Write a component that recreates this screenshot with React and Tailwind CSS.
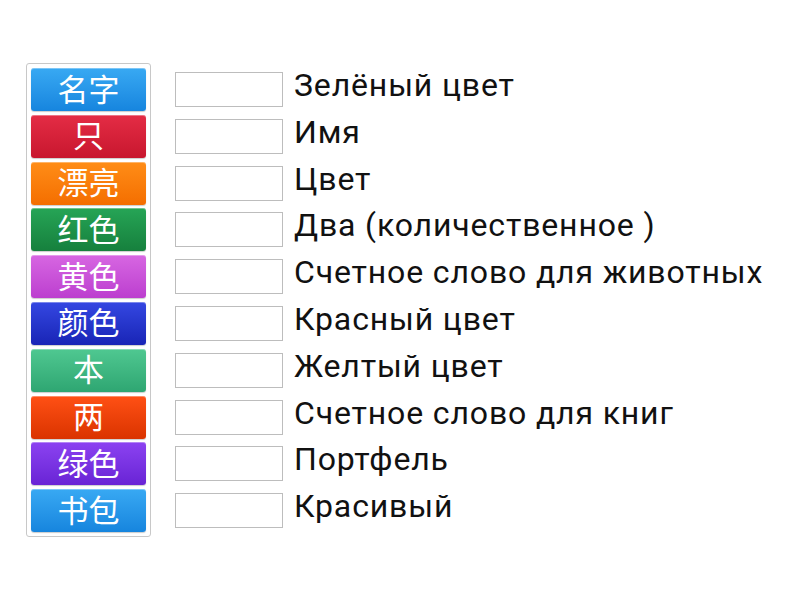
const tiles = [
  { zh: '名字', cls: 'bg-gradient-to-b from-[#38a9f3] to-[#1685de]' },
  { zh: '只', cls: 'bg-gradient-to-b from-[#e42c45] to-[#c8162e]' },
  { zh: '漂亮', cls: 'bg-gradient-to-b from-[#ff8d16] to-[#f46e00]' },
  { zh: '红色', cls: 'bg-gradient-to-b from-[#26a556] to-[#16803d]' },
  { zh: '黄色', cls: 'bg-gradient-to-b from-[#d766e2] to-[#bc3ecf]' },
  { zh: '颜色', cls: 'bg-gradient-to-b from-[#3547e2] to-[#1924b6]' },
  { zh: '本', cls: 'bg-gradient-to-b from-[#4fc891] to-[#2ea672]' },
  { zh: '两', cls: 'bg-gradient-to-b from-[#ff5014] to-[#da3300]' },
  { zh: '绿色', cls: 'bg-gradient-to-b from-[#8c42f1] to-[#6923d5]' },
  { zh: '书包', cls: 'bg-gradient-to-b from-[#38a9f3] to-[#1685de]' },
]

const answers = [
  'Зелёный цвет',
  'Имя',
  'Цвет',
  'Два (количественное )',
  'Счетное слово для животных',
  'Красный цвет',
  'Желтый цвет',
  'Счетное слово для книг',
  'Портфель',
  'Красивый',
]

const App = () => {
  return (
    <div className="w-[800px] h-[600px] bg-white font-['Roboto',sans-serif]">
      <div className="flex items-start pt-[63px] pl-[26px]">
        {/* Chinese tiles */}
        <div className="flex flex-col gap-[3.8px] p-[4px] border border-[#c8c8c8] rounded-[3px] bg-white">
          {tiles.map((t, i) => (
            <div
              key={i}
              className={`w-[115px] h-[43px] pb-[5px] rounded-[3px] flex items-center justify-center text-white text-[31px] leading-none shadow-[inset_0_1px_0_rgba(255,255,255,0.35),0_1px_1px_rgba(0,0,0,0.2)] font-['Noto_Sans_CJK_SC',sans-serif] ${t.cls}`}
            >
              {t.zh}
            </div>
          ))}
        </div>

        {/* Drop boxes with answers */}
        <div className="flex flex-col gap-[3.8px] pt-[5px] ml-[24px]">
          {answers.map((a, i) => (
            <div key={i} className="h-[43px] flex items-start">
              <div className="mt-[4px] w-[108px] h-[35px] border border-[#bdbdbd] bg-white shrink-0" />
              <span className="ml-[11px] mt-[1px] text-[32px] tracking-[0.85px] text-[#111] leading-none whitespace-nowrap">
                {a}
              </span>
            </div>
          ))}
        </div>
      </div>
    </div>
  )
}

export default App
